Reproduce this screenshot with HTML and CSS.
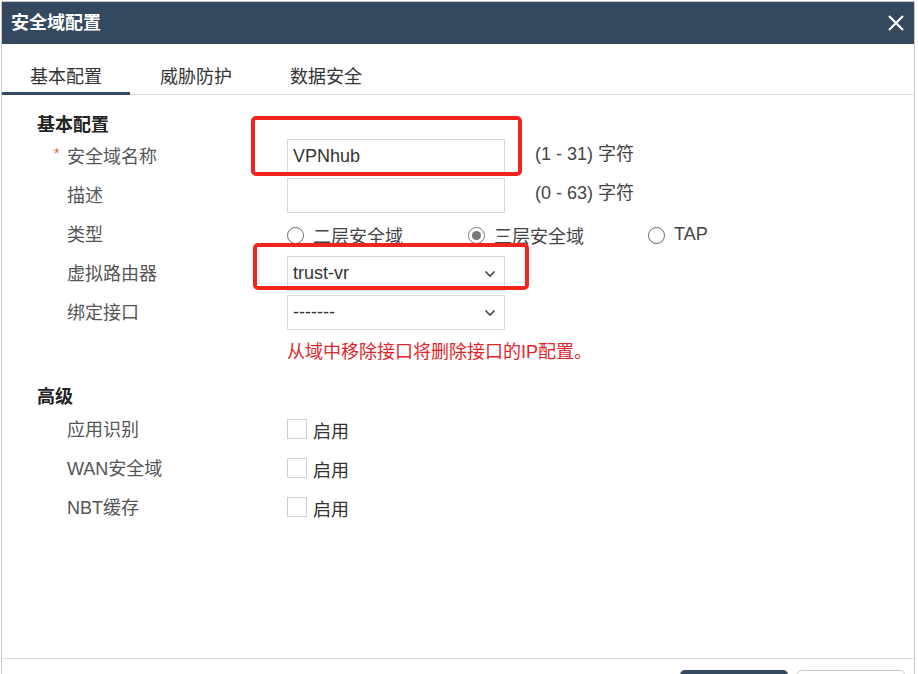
FILE: index.html
```html
<!DOCTYPE html>
<html lang="zh-CN">
<head>
<meta charset="utf-8">
<title>安全域配置</title>
<link rel="stylesheet" href="styles.css">
</head>
<body>
<div class="dialog">
  <div class="dialog-header">
    <span class="dialog-title">安全域配置</span>
    <svg class="close" width="16" height="16" viewBox="0 0 16 16"><path d="M1 1 L15 15 M15 1 L1 15" stroke="#fff" stroke-width="2.2" fill="none"/></svg>
  </div>
  <div class="tabs">
    <div class="tab active">基本配置</div>
    <div class="tab">威胁防护</div>
    <div class="tab">数据安全</div>
  </div>
  <div class="dialog-body">
    <div class="section">
      <div class="section-title">基本配置</div>
      <div class="row">
        <div class="label"><span class="req">*</span>安全域名称</div>
        <div class="input">VPNhub</div>
        <div class="hint">(1 - 31) 字符</div>
      </div>
      <div class="row">
        <div class="label">描述</div>
        <div class="input"></div>
        <div class="hint">(0 - 63) 字符</div>
      </div>
      <div class="row">
        <div class="label">类型</div>
        <div class="radios">
          <div class="radio-opt"><span class="radio"></span><span class="radio-text">二层安全域</span></div>
          <div class="radio-opt"><span class="radio checked"></span><span class="radio-text">三层安全域</span></div>
          <div class="radio-opt"><span class="radio"></span><span class="radio-text tap">TAP</span></div>
        </div>
      </div>
      <div class="row">
        <div class="label">虚拟路由器</div>
        <div class="input select">trust-vr<svg class="chev" width="12" height="8" viewBox="0 0 12 8"><path d="M1.5 1.5 L6 6 L10.5 1.5" stroke="#444" stroke-width="1.6" fill="none"/></svg></div>
      </div>
      <div class="row">
        <div class="label">绑定接口</div>
        <div class="input select">-------<svg class="chev" width="12" height="8" viewBox="0 0 12 8"><path d="M1.5 1.5 L6 6 L10.5 1.5" stroke="#444" stroke-width="1.6" fill="none"/></svg></div>
      </div>
      <div class="msg-row">
        <div class="warn">从域中移除接口将删除接口的IP配置。</div>
      </div>
    </div>
    <div class="section adv">
      <div class="section-title adv-title">高级</div>
      <div class="row">
        <div class="label">应用识别</div>
        <div class="check-opt"><span class="checkbox"></span><span class="check-text">启用</span></div>
      </div>
      <div class="row">
        <div class="label">WAN安全域</div>
        <div class="check-opt"><span class="checkbox"></span><span class="check-text">启用</span></div>
      </div>
      <div class="row">
        <div class="label">NBT缓存</div>
        <div class="check-opt"><span class="checkbox"></span><span class="check-text">启用</span></div>
      </div>
    </div>
  </div>
  <div class="dialog-footer">
    <div class="btn primary"></div>
    <div class="btn secondary"></div>
  </div>
  <div class="mark mark1"></div>
  <div class="mark mark2"></div>
</div>
</body>
</html>
```
FILE: styles.css
```css
html, body {
  margin: 0;
  padding: 0;
  background: #ffffff;
  height: 674px;
  overflow: hidden;
}
body {
  font-family: "Liberation Sans", "Noto Sans CJK SC", sans-serif;
  font-size: 18px;
  color: #333;
}
.dialog {
  position: relative;
  box-sizing: border-box;
  width: 914px;
  margin: 1px 0 0 1px;
  border: 1px solid #c9c9c9;
  background: #fff;
  display: flex;
  flex-direction: column;
}
.dialog-header {
  height: 42px;
  background: #34495f;
  display: flex;
  align-items: center;
  justify-content: space-between;
  padding: 0 10px 0 9px;
}
.dialog-title {
  color: #fff;
  font-weight: bold;
  font-size: 18px;
  line-height: 42px;
}
.close {
  display: block;
}
.tabs {
  height: 50px;
  border-bottom: 1px solid #dcdcdc;
  display: flex;
  gap: 2px;
}
.tab {
  width: 128px;
  height: 50px;
  box-sizing: border-box;
  display: flex;
  align-items: flex-end;
  justify-content: center;
  line-height: 24px;
  padding-bottom: 5px;
  color: #333;
  font-size: 18px;
}
.tab.active {
  height: 51px;
  border-bottom: 3px solid #34495f;
  margin-bottom: -1px;
  padding-bottom: 3px;
}
.dialog-body {
  height: 563px;
  box-sizing: border-box;
  padding: 17px 0 0 35px;
}
.section-title {
  font-weight: bold;
  color: #222;
  height: 26px;
  line-height: 26px;
  margin-bottom: 1px;
}
.row {
  display: flex;
  align-items: center;
  height: 35px;
  margin-bottom: 4px;
}
.label {
  width: 250px;
  box-sizing: border-box;
  padding-left: 30px;
  color: #555;
  position: relative;
  line-height: 24px;
}
.req {
  position: absolute;
  left: 17px;
  top: -4px;
  color: #d9534f;
  font-size: 14px;
}
.input {
  width: 218px;
  height: 35px;
  box-sizing: border-box;
  border: 1px solid #d9d9d9;
  padding: 0 6px 0 5px;
  line-height: 33px;
  color: #333;
  display: flex;
  align-items: center;
  justify-content: space-between;
}
.chev {
  display: block;
  margin-right: 2px;
}
.hint {
  margin-left: 30px;
  margin-top: -5px;
  color: #444;
  line-height: 24px;
}
.radios {
  display: flex;
  align-items: center;
}
.radio-opt {
  width: 180px;
  display: flex;
  align-items: center;
}
.radio-opt:first-child {
  width: 181px;
}
.radio {
  width: 17px;
  height: 17px;
  box-sizing: border-box;
  border: 1px solid #666;
  border-radius: 50%;
  margin-top: 2px;
  display: flex;
  align-items: center;
  justify-content: center;
}
.radio.checked {
  border-color: #777;
}
.radio.checked::after {
  content: "";
  width: 9px;
  height: 9px;
  border-radius: 50%;
  background: #777;
}
.radio-text {
  margin-left: 9px;
  color: #444;
}
.radio-text.tap {
  margin-top: -1px;
}
.msg-row {
  height: 32px;
  display: flex;
  align-items: center;
  padding-left: 250px;
}
.warn {
  color: #e0262b;
}
.adv {
  margin-top: 18px;
}
.adv-title {
  margin-bottom: 2px;
}
.check-opt {
  display: flex;
  align-items: center;
}
.checkbox {
  width: 20px;
  height: 20px;
  box-sizing: border-box;
  border: 1px solid #cfcfcf;
  margin-top: -2px;
}
.check-text {
  margin-left: 6px;
  color: #333;
}
.dialog-footer {
  border-top: 1px solid #dcdcdc;
  padding: 11px 9px 0 0;
  height: 60px;
  display: flex;
  justify-content: flex-end;
  gap: 9px;
}
.btn {
  width: 108px;
  height: 36px;
  box-sizing: border-box;
  border-radius: 5px;
}
.btn.primary {
  background: #34495f;
}
.btn.secondary {
  background: #fff;
  border: 1px solid #c8c8c8;
}
.mark {
  position: absolute;
  border: 4px solid #f0261c;
  border-radius: 5px;
  box-sizing: border-box;
}
.mark1 {
  left: 249px;
  top: 114px;
  width: 271px;
  height: 60px;
}
.mark2 {
  left: 251px;
  top: 241px;
  width: 276px;
  height: 47px;
}
```
